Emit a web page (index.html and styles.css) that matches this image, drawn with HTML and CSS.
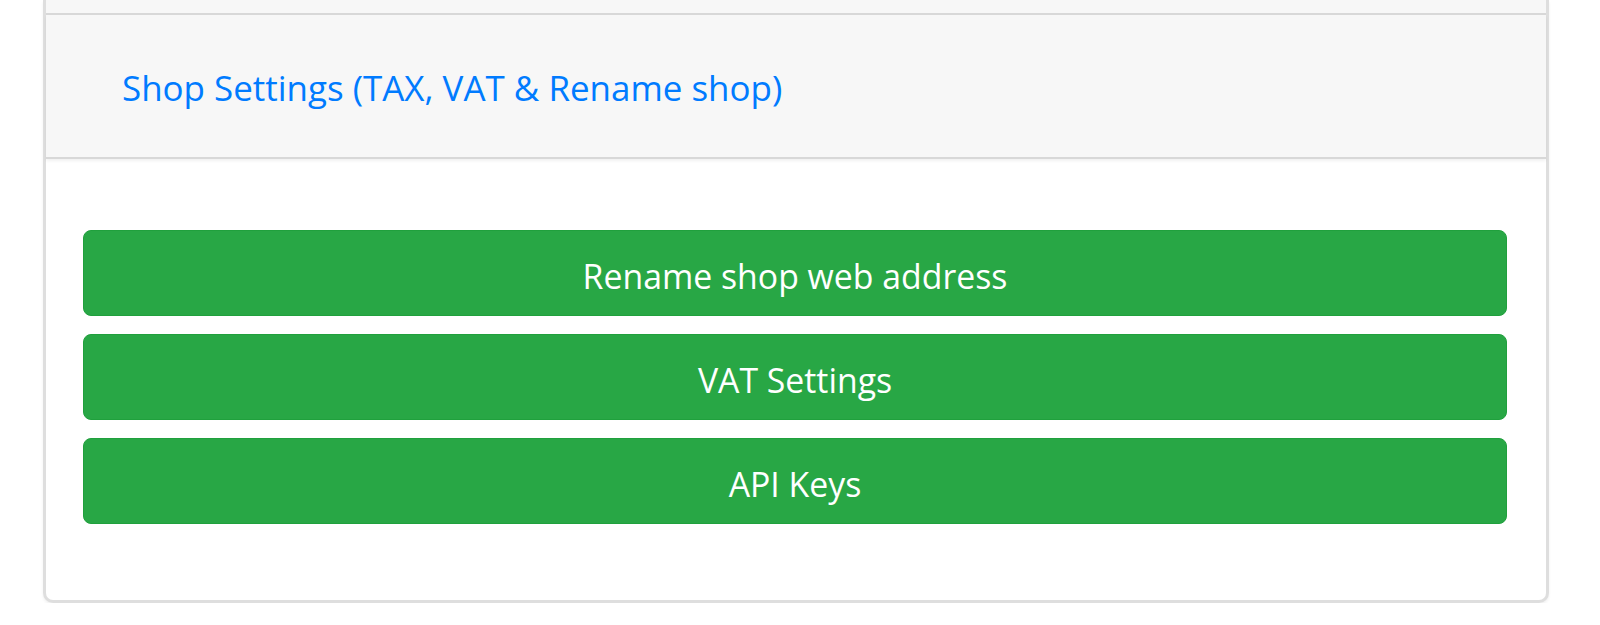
FILE: index.html
```html
<!DOCTYPE html>
<html lang="en">
<head>
<meta charset="utf-8">
<title>Shop Settings</title>
<link rel="stylesheet" href="styles.css">
</head>
<body>
<div class="card">
  <div class="card-prev"></div>
  <div class="card-header">
    <a class="header-link" href="#">Shop Settings (TAX, VAT &amp; Rename shop)</a>
  </div>
  <div class="card-body">
    <button class="btn">Rename shop web address</button>
    <button class="btn">VAT Settings</button>
    <button class="btn">API Keys</button>
  </div>
</div>
</body>
</html>
```
FILE: styles.css
```css
html, body {
  margin: 0;
  padding: 0;
  background: #ffffff;
}

body {
  font-family: "Open Sans", "Noto Sans", sans-serif;
}

.card {
  margin-left: 43px;
  width: 1506px;
  box-sizing: border-box;
  border: 3px solid #dedede;
  border-top: none;
  border-radius: 0 0 10px 10px;
  box-shadow: 0 2px 3px rgba(0, 0, 0, 0.06);
  background: #ffffff;
  display: flex;
  flex-direction: column;
}

.card-prev {
  height: 13px;
  background: #f7f7f7;
  border-bottom: 2px solid #d8d8d8;
}

.card-header {
  height: 144px;
  box-sizing: border-box;
  background: #f7f7f7;
  border-bottom: 2px solid #d8d8d8;
  box-shadow: 0 2px 3px rgba(0, 0, 0, 0.06);
  display: flex;
  align-items: center;
  padding: 5px 0 0 76px;
  position: relative;
}

.header-link {
  color: #007bff;
  text-decoration: none;
  font-size: 34.95px;
  line-height: 1.5;
}

.card-body {
  padding: 71px 39px 76px 37px;
  display: flex;
  flex-direction: column;
  gap: 18px;
}

.btn {
  height: 86px;
  width: 100%;
  box-sizing: border-box;
  border: 1px solid #20a03d;
  border-radius: 8px;
  background: #28a745;
  color: #ffffff;
  font-family: "Open Sans", "Noto Sans", sans-serif;
  font-size: 33.8px;
  line-height: 1.5;
  padding: 6px 0 0 0;
  text-align: center;
  cursor: pointer;
}
```
